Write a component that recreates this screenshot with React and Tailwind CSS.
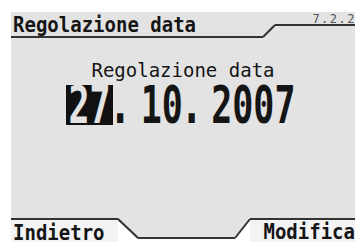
export default function App() {
  return (
    <div className="w-[359px] h-[246px] bg-white pt-[12px] pl-[11px] font-['DejaVu_Sans_Mono',monospace] text-[#151515]">
      <div className="w-[344px] h-[230px] flex flex-col">

        {/* header */}
        <div className="flex h-[26px] bg-[#e3e3e3]">
          <div className="w-[252px] border-b-2 border-[#333] pl-[2px] pt-[2px]">
            <span className="inline-block text-[19px] leading-[19px] font-bold scale-y-[1.15]">Regolazione data</span>
          </div>
          <svg width="12" height="26" className="shrink-0">
            <line x1="0" y1="25" x2="12" y2="13" stroke="#333" strokeWidth="2" />
          </svg>
          <div className="flex-1 self-start h-[14px] border-b-2 border-[#333] flex justify-end items-end">
            <span className="text-[12px] leading-[12px] tracking-[1.5px] -mr-[1px] text-[#555] -mb-[1px]">7.2.2</span>
          </div>
        </div>

        {/* body */}
        <div className="flex-1 bg-[#e3e3e3] flex flex-col items-center pt-[23px]">
          <span className="text-[19px] leading-[19px]">Regolazione data</span>
          <div className="flex items-start mt-[5px] mr-[4px] text-[35px] leading-[40px] font-bold">
            <div className="h-[40px] w-[47px] bg-[#111] text-[#e3e3e3] pl-[2px]">
              <span className="inline-block scale-y-[1.45] translate-y-[1px]">27</span>
            </div>
            <span className="inline-block mr-[14px] font-['DejaVu_Sans',sans-serif] scale-y-[1.45] translate-y-[1px]">.</span>
            <span className="inline-block scale-y-[1.45] translate-y-[1px]">10</span>
            <span className="inline-block ml-[2px] mr-[13px] font-['DejaVu_Sans',sans-serif] scale-y-[1.45] translate-y-[1px]">.</span>
            <span className="inline-block scale-y-[1.45] translate-y-[1px]">2007</span>
          </div>
        </div>

        {/* soft keys */}
        <div className="flex h-[24px] bg-white">
          <div className="w-[107px] border-t-2 border-[#333] bg-[#f3f3f3] pl-[2px] pt-[2px]">
            <span className="inline-block text-[19px] leading-[19px] font-bold scale-y-[1.15]">Indietro</span>
          </div>
          <svg width="20" height="24" className="shrink-0">
            <polygon points="0,0 20,0 20,20 0,1" fill="#e3e3e3" />
            <line x1="0" y1="1" x2="20" y2="20" stroke="#333" strokeWidth="2" />
          </svg>
          <div className="w-[97px] self-start h-[21px] bg-[#e3e3e3] border-b-2 border-[#333]" />
          <svg width="15" height="24" className="shrink-0">
            <polygon points="0,0 15,0 15,1 0,20" fill="#e3e3e3" />
            <line x1="0" y1="20" x2="15" y2="1" stroke="#333" strokeWidth="2" />
          </svg>
          <div className="flex-1 border-t-2 border-[#333] bg-[#f3f3f3] pt-[2px] flex justify-end">
            <span className="inline-block text-[19px] leading-[19px] font-bold scale-y-[1.15]">Modifica</span>
          </div>
        </div>

      </div>
    </div>
  );
}
